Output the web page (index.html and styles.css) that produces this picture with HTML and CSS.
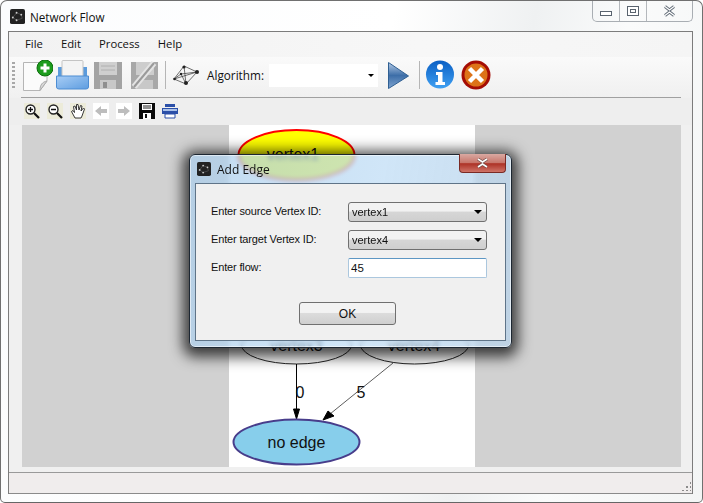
FILE: index.html
```html
<!doctype html>
<html lang="en">
  <head>
    <meta charset="UTF-8" />
    <title>Network Flow</title>
    <link rel="stylesheet" href="styles.css">
  </head>
  <body>
    <div class="window">
      <div class="titlebar">
        <svg class="app-icon" width="15" height="15" viewBox="0 0 16 16">
          <rect width="16" height="16" rx="2" fill="#222" />
          <path d="M3 9 7 4 12 6 13 10 7 12Z" fill="none" stroke="#666" stroke-width="0.6" />
          <circle cx="7" cy="4" r="1" fill="#ccc" /><circle cx="12" cy="6" r="1" fill="#ccc" />
          <circle cx="3" cy="9" r="1" fill="#ccc" /><circle cx="7" cy="12" r="1" fill="#ccc" />
        </svg>
        <span class="title">Network Flow</span>
        <div class="caption-buttons">
          <div class="caption-btn min"><span class="glyph-min"></span></div>
          <div class="caption-btn max"><span class="glyph-max"></span></div>
          <div class="caption-btn close">
            <svg width="13" height="12" viewBox="0 0 13 12">
              <path d="M2 1.5 6.5 5 11 1.5M2 10.5 6.5 7 11 10.5" fill="none" stroke="#5f6a75" stroke-width="3" />
              <path d="M2 1.5 6.5 5 11 1.5M2 10.5 6.5 7 11 10.5" fill="none" stroke="#fff" stroke-width="1.2" />
            </svg>
          </div>
        </div>
      </div>

      <div class="client">
        <nav class="menu">
          <span>File</span><span>Edit</span><span>Process</span><span>Help</span>
        </nav>

        <div class="toolbar">
          <div class="gripper"></div>
          <svg class="tool-new" width="30" height="31" viewBox="0 0 30 31">
            <path d="M.5 2.5H24V21L17 30.5H.5Z" fill="#fbfbfb" stroke="#b5b5b5" />
            <path d="M24 21 17 30.5C17 25 19 22 24 21Z" fill="#d8d8d8" stroke="#aaa" />
            <circle cx="22" cy="8" r="8" fill="#1d9c1d" stroke="#0c6d0c" />
            <path d="M22 3.5V12.5M17.5 8H26.5" stroke="#fff" stroke-width="3" />
          </svg>
          <svg class="tool-open" width="33" height="30" viewBox="0 0 33 30">
            <defs>
              <linearGradient id="folder" x1="0" y1="0" x2="1" y2="1">
                <stop offset="0" stop-color="#a8cdf5" /><stop offset="1" stop-color="#5e9de0" />
              </linearGradient>
            </defs>
            <path d="M2 7H31V20H2Z" fill="#5b9bdc" />
            <rect x="6" y="0.5" width="21" height="18" rx="1" fill="#f4f4f4" stroke="#c4c4c4" />
            <path d="M0.5 16H32.5V27Q32.5 29 30 29H3Q0.5 29 0.5 27Z" fill="url(#folder)" stroke="#4d8dd3" />
          </svg>
          <svg class="tool-save" width="28" height="28" viewBox="0 0 28 28">
            <path d="M0 1H28V28H0Z" fill="#a3a3a3" />
            <rect x="5" y="1" width="18" height="13" fill="#cfcfcf" />
            <path d="M7 5H21M7 9H21" stroke="#b0b0b0" />
            <rect x="6" y="19" width="16" height="9" fill="#c8c8c8" />
            <rect x="9" y="21" width="4" height="6" fill="#8f8f8f" />
          </svg>
          <svg class="tool-edit" width="31" height="28" viewBox="0 0 31 28">
            <path d="M2 1H29V28H2Z" fill="#a8a8a8" />
            <rect x="7" y="1" width="18" height="13" fill="#cdcdcd" />
            <rect x="8" y="19" width="16" height="9" fill="#c8c8c8" />
            <path d="M25 2 5 26" stroke="#e4e4e4" stroke-width="6" />
            <path d="M25 2 5 26" stroke="#9a9a9a" stroke-width="2" />
          </svg>
          <div class="tool-sep"></div>
          <svg class="tool-graph" width="26" height="20" viewBox="0 0 26 20">
            <path d="M1 14 11 1 24 7 13 19ZM1 14 24 7M11 1 13 19M8 9 24 7M8 9 1 14M8 9 13 19" fill="none" stroke="#333" stroke-width="0.7" />
            <circle cx="11" cy="2" r="1.6" fill="#222" /><circle cx="24" cy="7" r="2" fill="#222" />
            <circle cx="1.5" cy="14" r="1.3" fill="#222" /><circle cx="13" cy="18" r="2" fill="#222" />
            <circle cx="8" cy="9" r="1.2" fill="#222" />
          </svg>
          <label class="algo-label">Algorithm:</label>
          <div class="algo-combo"><span class="arrow"></span></div>
          <svg class="tool-play" width="21" height="27" viewBox="0 0 21 27">
            <defs>
              <linearGradient id="play" x1="0" y1="0" x2="0" y2="1">
                <stop offset="0" stop-color="#b5cbe6" /><stop offset="0.5" stop-color="#3d6ea8" /><stop offset="1" stop-color="#7fa4d0" />
              </linearGradient>
            </defs>
            <path d="M.5 .5 20.5 14 .5 26.5Z" fill="url(#play)" stroke="#2f5f92" />
          </svg>
          <div class="tool-sep second"></div>
          <svg class="tool-info" width="30" height="30" viewBox="0 0 30 30">
            <defs>
              <linearGradient id="info" x1="0" y1="0" x2="0" y2="1">
                <stop offset="0" stop-color="#0a5fc4" /><stop offset="1" stop-color="#3fa0f2" />
              </linearGradient>
            </defs>
            <circle cx="15" cy="14.5" r="14" fill="url(#info)" />
            <circle cx="15" cy="7" r="3" fill="#fff" />
            <path d="M11 12H17.5V22H20V25H10.5V22H13V15H11Z" fill="#fff" />
          </svg>
          <svg class="tool-stop" width="30" height="30" viewBox="0 0 30 30">
            <circle cx="15" cy="15" r="14.5" fill="#a50d05" />
            <circle cx="15" cy="15" r="11.5" fill="#dd7318" />
            <path d="M8.5 8.5 21.5 21.5M21.5 8.5 8.5 21.5" stroke="#fff" stroke-width="4.5" />
          </svg>
        </div>

        <div class="toolbar-small">
          <svg class="tiny zoom-btn" viewBox="0 0 16 16"><circle cx="6.5" cy="6.5" r="4.5" fill="#fff" stroke="#222" stroke-width="1.4" /><path d="M10 10 15 15" stroke="#111" stroke-width="2.2" /><path d="M4 6.5H9M6.5 4V9" stroke="#111" stroke-width="1.3" /></svg>
          <svg class="tiny zoom-btn" viewBox="0 0 16 16"><circle cx="6.5" cy="6.5" r="4.5" fill="#fff" stroke="#222" stroke-width="1.4" /><path d="M10 10 15 15" stroke="#111" stroke-width="2.2" /><path d="M4 6.5H9" stroke="#111" stroke-width="1.3" /></svg>
          <svg class="tiny zoom-btn" viewBox="0 0 16 16"><path d="M5 15 1.5 8.5 3 7.5 4.5 9.5 3.5 3.5 5 3 6.5 7 6.5 1.5 8 1.5 9 7 10.5 2.5 12 3 11 8 13.5 5 14.5 6 12 13 11 15Z" fill="#fff" stroke="#222" stroke-width="0.9" /></svg>
          <svg class="tiny arrow-btn" viewBox="0 0 16 16"><path d="M2 8 8 3V6H14V10H8V13Z" fill="#bdbdbd" /></svg>
          <svg class="tiny arrow-btn" viewBox="0 0 16 16"><path d="M14 8 8 3V6H2V10H8V13Z" fill="#bdbdbd" /></svg>
          <svg class="tiny" viewBox="0 0 16 16"><path d="M0 0H16V16H0Z" fill="#0a0a0a" /><rect x="3" y="1" width="10" height="6" fill="#fff" /><path d="M4 3H12M4 5H12" stroke="#222" /><rect x="4" y="10" width="8" height="6" fill="#fff" /><rect x="6" y="11" width="2" height="4" fill="#111" /></svg>
          <svg class="tiny" viewBox="0 0 16 16"><path d="M3 1H13V4H3Z" fill="#2a4fa8" /><path d="M0 5H16V11H0Z" fill="#2a4fa8" /><path d="M1 6H15V8H1Z" fill="#a9c1ea" /><path d="M3 11H13V15H3Z" fill="#fff" stroke="#2a4fa8" /></svg>
        </div>

        <div class="canvas">
          <div class="page">
            <svg class="graph" width="246" height="342" viewBox="229 125 246 342">
              <ellipse cx="296.5" cy="155" rx="58" ry="25" fill="#ffff00" stroke="#ff0000" stroke-width="2" />
              <text x="293" y="160">vertex1</text>
              <ellipse cx="296.5" cy="345" rx="55" ry="19" fill="#fff" stroke="#222" />
              <text x="296.5" y="351">vertex3</text>
              <ellipse cx="414.5" cy="345" rx="54" ry="19" fill="#fff" stroke="#222" />
              <text x="414" y="351">vertex4</text>
              <path d="M296.5 364V410" stroke="#000" />
              <path d="M296.5 419 293.5 409H299.5Z" fill="#000" stroke="#000" />
              <text x="300" y="398">0</text>
              <path d="M393 363 330 414" stroke="#333" stroke-width="0.8" />
              <path d="M323 420 328 411 334 416Z" fill="#000" stroke="#000" />
              <text x="361" y="398">5</text>
              <ellipse cx="296.5" cy="442" rx="63" ry="22.5" fill="#87ceeb" stroke="#483d8b" stroke-width="2" />
              <text x="296.5" y="447.5">no edge</text>
            </svg>
          </div>
        </div>

        <div class="statusbar"></div>
      </div>

      <div class="dialog">
        <div class="dialog-title">
          <svg class="app-icon" width="14" height="14" viewBox="0 0 16 16">
            <rect width="16" height="16" rx="2" fill="#222" />
            <path d="M3 9 7 4 12 6 13 10 7 12Z" fill="none" stroke="#666" stroke-width="0.6" />
            <circle cx="7" cy="4" r="1" fill="#ccc" /><circle cx="12" cy="6" r="1" fill="#ccc" />
            <circle cx="3" cy="9" r="1" fill="#ccc" /><circle cx="7" cy="12" r="1" fill="#ccc" />
          </svg>
          <span>Add Edge</span>
          <div class="dialog-close">
            <svg width="13" height="10" viewBox="0 0 13 10">
              <path d="M2 1 6.5 4 11 1M2 9 6.5 6 11 9" fill="none" stroke="#6b4a46" stroke-width="3" />
              <path d="M2 1 6.5 4 11 1M2 9 6.5 6 11 9" fill="none" stroke="#fff" stroke-width="1.6" />
            </svg>
          </div>
        </div>
        <div class="dialog-body">
          <form class="edge-form">
            <label>Enter source Vertex ID:</label>
            <div class="combo">vertex1<span class="arrow"></span></div>
            <label>Enter target Vertex ID:</label>
            <div class="combo">vertex4<span class="arrow"></span></div>
            <label>Enter flow:</label>
            <input class="flow-input" type="text" value="45" />
          </form>
          <button type="button" class="ok-btn">OK</button>
        </div>
      </div>
    </div>
  </body>
</html>
```

FILE: styles.css
```css
* {
  box-sizing: border-box;
}

html,
body {
  margin: 0;
  height: 100%;
  background: #fff;
  font-family: "Open Sans", "Liberation Sans", sans-serif;
  font-size: 12px;
  color: #111;
}

.window {
  position: relative;
  width: 703px;
  height: 503px;
  padding: 0 9px 8px 7px;
  display: flex;
  flex-direction: column;
  border: 1px solid #707070;
  border-bottom-color: #666;
  border-radius: 7px 7px 5px 5px;
  background: linear-gradient(100deg, #fbfcfd 0%, #fff 50%, #eff1f2 68%, #fafbfb 80%, #f3f5f5 100%);
  overflow: hidden;
}

.titlebar {
  height: 30px;
  flex: none;
  display: flex;
  align-items: center;
  gap: 5px;
  padding-top: 1px;
  margin-left: 2px;
}

.app-icon {
  flex: none;
}

.title {
  font-size: 11.7px;
}

.caption-buttons {
  margin-left: auto;
  margin-top: -1px;
  align-self: flex-start;
  display: flex;
  height: 21px;
  width: 101px;
  border: 1px solid #a9aeb3;
  border-top: 0;
  border-radius: 0 0 5px 5px;
}

.caption-btn {
  display: flex;
  align-items: center;
  justify-content: center;
  border-right: 1px solid #b4b8bc;
}

.caption-btn.min,
.caption-btn.max {
  width: 27px;
}

.caption-btn.close {
  flex: 1;
  border-right: 0;
}

.glyph-min {
  width: 12px;
  height: 5px;
  margin-top: 5px;
  border: 1px solid #59636e;
  background: #fff;
}

.glyph-max {
  width: 12px;
  height: 10px;
  border: 1px solid #59636e;
  box-shadow: inset 0 0 0 2px #fff, inset 0 0 0 3px #59636e;
}

.client {
  flex: 1;
  display: flex;
  flex-direction: column;
  border: 1px solid #7c7c7c;
  border-bottom: 0;
  background: #f0f0f0;
}

.menu {
  height: 25px;
  flex: none;
  display: flex;
  align-items: center;
  gap: 18px;
  padding: 0 0 2px 16px;
  font-size: 11.3px;
  background: linear-gradient(90deg, #f2f2f2, #f7f7f7 60%, #f5f5f5);
}

.toolbar {
  height: 41px;
  flex: none;
  display: flex;
  align-items: center;
  padding: 0 0 5px 3px;
  background: linear-gradient(#fafafa, #f0f0f0);
  position: relative;
}

.toolbar::after {
  content: "";
  position: absolute;
  left: 12px;
  right: 11px;
  bottom: 0;
  height: 1px;
  background: #a0a0a0;
}

.gripper {
  width: 3px;
  height: 26px;
  margin-right: 8px;
  background: repeating-linear-gradient(#a8a8a8 0 2px, transparent 2px 4px);
}

.tool-new {
  margin-right: 3px;
}

.tool-open {
  margin-right: 5px;
}

.tool-save {
  margin-right: 7px;
}

.tool-edit {
  margin-right: 5px;
}

.tool-sep {
  width: 1px;
  height: 28px;
  background: #b5b5b5;
  margin-right: 7px;
}

.tool-sep.second {
  margin: 0 5px 0 10px;
}

.tool-graph {
  margin-right: 8px;
}

.algo-label {
  width: 62px;
  font-size: 11.75px;
}

.algo-combo {
  position: relative;
  width: 109px;
  height: 23px;
  margin-right: 10px;
  background: #fff;
}

.algo-combo .arrow {
  position: absolute;
  right: 4px;
  top: 10px;
}

.arrow {
  display: block;
  width: 0;
  height: 0;
  border: 3px solid transparent;
  border-top: 3px solid #000;
  border-bottom: 0;
}

.tool-info {
  margin-right: 6px;
}

.toolbar-small {
  height: 27px;
  flex: none;
  display: flex;
  align-items: center;
  gap: 7px;
  padding-left: 15px;
  padding-bottom: 2px;
  background: #eeeeee;
}

.tiny {
  width: 16px;
  height: 16px;
  flex: none;
}

.zoom-btn {
  background: #ecebd9;
}

.arrow-btn {
  background: #fff;
}

.canvas {
  height: 342px;
  flex: none;
  margin: 0 11px 0 13px;
  padding-left: 1px;
  display: flex;
  justify-content: center;
  background: #d1d1d1;
}

.page {
  width: 246px;
  background: #fff;
}

.graph {
  display: block;
}

.graph text {
  font-family: "Liberation Sans", sans-serif;
  font-size: 16px;
  text-anchor: middle;
  fill: #111;
}

.statusbar {
  margin-top: 5px;
  flex: 1;
  border-top: 1px solid #9a9a9a;
  border-bottom: 1px solid #8a8a8a;
  background: #f0eded;
  position: relative;
}

.statusbar::after {
  content: "";
  position: absolute;
  right: 1px;
  bottom: 2px;
  width: 10px;
  height: 10px;
  background:
    radial-gradient(circle, #8b8b8b 1px, transparent 1.2px) 0 0 / 4px 4px;
  clip-path: polygon(100% 0, 100% 100%, 0 100%);
}

.dialog {
  position: absolute;
  left: 188px;
  top: 153px;
  width: 323px;
  height: 194px;
  padding: 0 5px 6px;
  display: flex;
  flex-direction: column;
  border: 1px solid #1d2732;
  border-radius: 6px;
  background: linear-gradient(100deg, rgba(170, 205, 235, 0.72), rgba(190, 220, 245, 0.72) 55%, rgba(185, 210, 232, 0.8));
  backdrop-filter: blur(2px);
  box-shadow: 0 3px 14px 6px rgba(0, 0, 0, 0.72), inset 0 0 0 1px rgba(255, 255, 255, 0.55);
}

.dialog-title {
  height: 28px;
  flex: none;
  display: flex;
  align-items: center;
  gap: 6px;
  margin-left: 2px;
  font-size: 12px;
  position: relative;
}

.dialog-close {
  position: absolute;
  right: 0;
  top: -1px;
  width: 47px;
  height: 19px;
  display: flex;
  align-items: center;
  justify-content: center;
  border: 1px solid #7a2a24;
  border-top: 0;
  border-radius: 0 0 4px 4px;
  background: linear-gradient(#d9a9a2, #c8776c 48%, #ad3226 54%, #cf7468);
}

.dialog-body {
  flex: 1;
  padding: 18px 15px 0;
  border: 1px solid #5f7488;
  background: #f0f0f0;
}

.edge-form {
  display: grid;
  grid-template-columns: 137px 139px;
  grid-template-rows: 20px 20px 20px;
  row-gap: 8px;
  align-items: center;
}

.edge-form label {
  padding-bottom: 2px;
  font-family: "Liberation Sans", sans-serif;
  font-size: 11px;
  letter-spacing: -0.15px;
  color: #111;
}

.combo {
  position: relative;
  height: 20px;
  padding: 3px 0 0 3px;
  font-family: "Liberation Sans", sans-serif;
  font-size: 11px;
  border: 1px solid #707070;
  border-radius: 3px;
  background: linear-gradient(#f2f2f2 45%, #d6d6d6 50%, #cfcfcf);
}

.combo .arrow {
  position: absolute;
  right: 4px;
  top: 7px;
  border-width: 4px;
  border-bottom: 0;
}

.flow-input {
  height: 20px;
  width: 139px;
  padding: 0 0 0 2px;
  font-family: "Liberation Sans", sans-serif;
  font-size: 11.5px;
  color: #111;
  background: #fff;
  border: 1px solid #abc7de;
  border-top-color: #5d97c4;
  border-radius: 2px;
  outline: 0;
}

.ok-btn {
  display: block;
  width: 97px;
  height: 23px;
  margin: 24px 0 0 88px;
  padding: 0;
  font-family: "Liberation Sans", sans-serif;
  font-size: 12px;
  color: #111;
  border: 1px solid #707070;
  border-radius: 3px;
  background: linear-gradient(#f3f3f3 45%, #dcdcdc 50%, #cfcfcf);
}
```
